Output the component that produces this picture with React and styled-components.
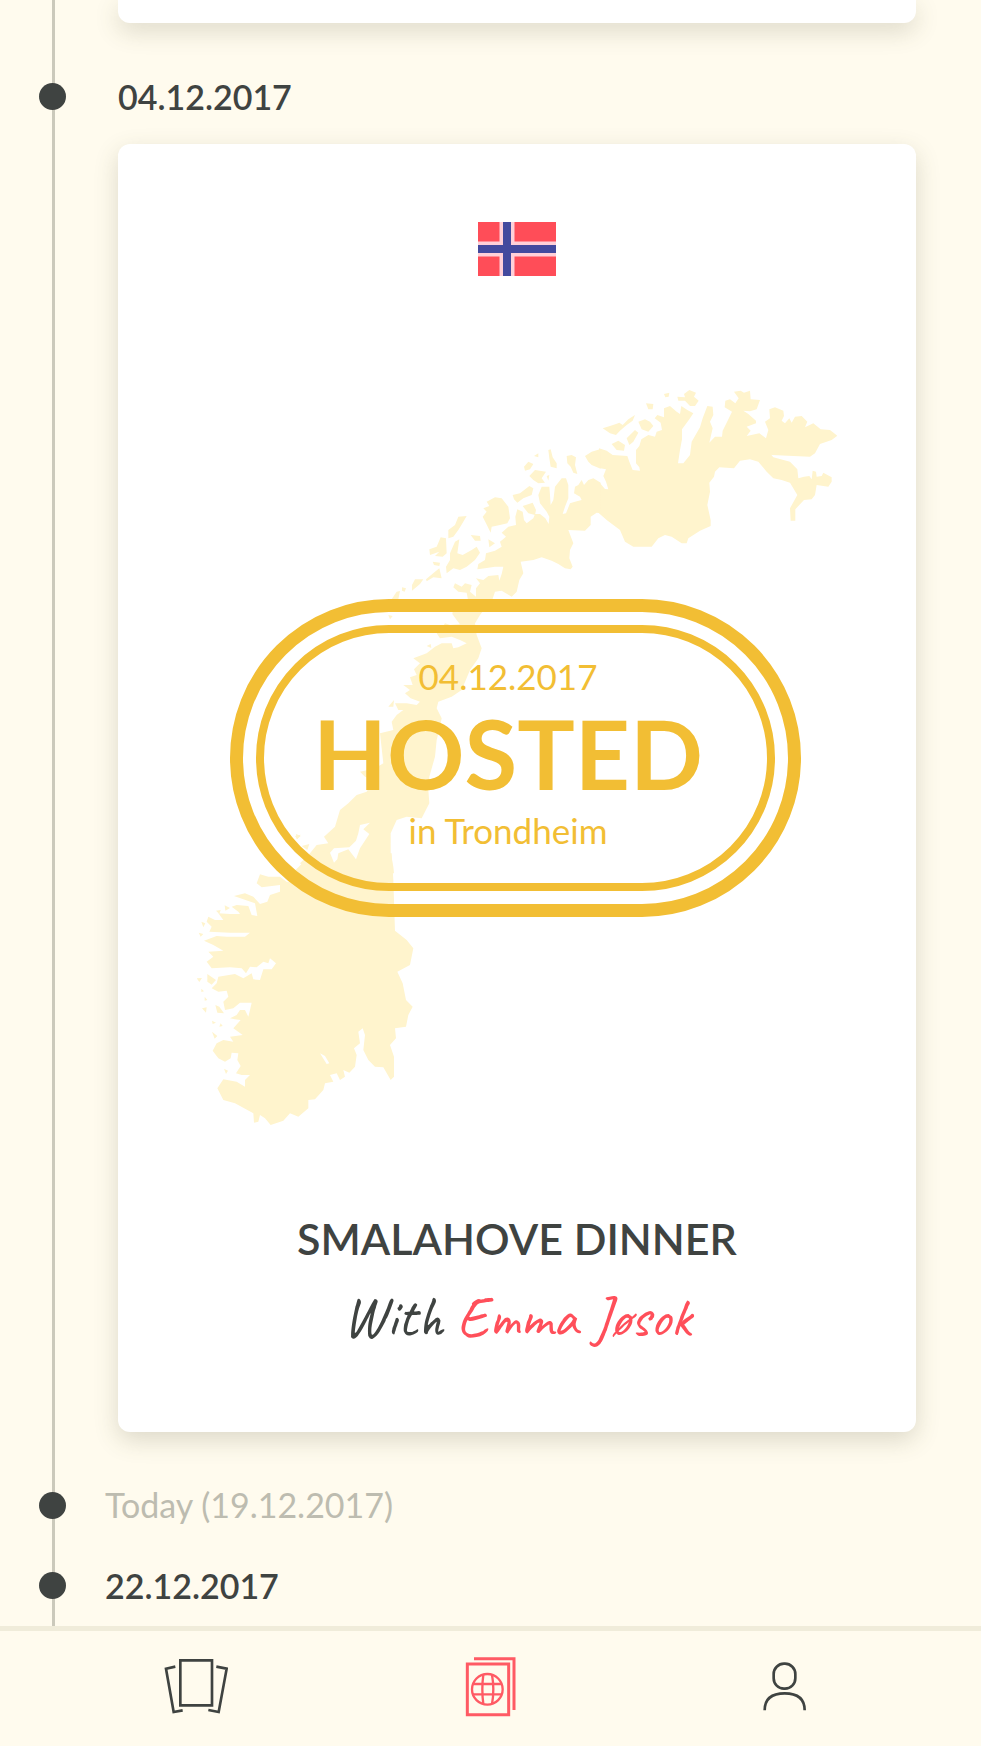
import React from "react";
import styled, { createGlobalStyle } from "styled-components";

const GlobalStyle = createGlobalStyle`
  *, *::before, *::after { box-sizing: border-box; }
  body {
    margin: 0;
    background: #fffbee;
    color: #3f4341;
    font-family: Lato, "Open Sans", sans-serif;
  }
`;

const Page = styled.div`
  min-height: 100vh;
  display: flex;
  flex-direction: column;
`;

const Timeline = styled.main`
  flex: 1;
  background: linear-gradient(#cbc9bb, #cbc9bb) 52px 0 / 3px 100% no-repeat;
`;

const Card = styled.article`
  margin: 0 65px 0 118px;
  padding: 78px 40px 87px;
  background: #fff;
  border-radius: 12px;
  box-shadow: 0 8px 24px rgba(80, 80, 50, 0.2);
  display: flex;
  flex-direction: column;
  align-items: center;
`;

const PreviousCard = styled(Card)`
  height: 23px;
  padding: 0;
  border-radius: 0 0 12px 12px;
`;

const Marker = styled.div`
  display: flex;
  align-items: center;
  gap: ${(p) => (p.$indent ? 52 : 39)}px;
  height: ${(p) => p.$height}px;
  padding: ${(p) => p.$top || 0}px 0 0 39px;
`;

const Dot = styled.span`
  flex: none;
  width: 27px;
  height: 27px;
  border-radius: 50%;
  background: #3f4341;
`;

const DateLabel = styled.time`
  font-size: 34px;
  line-height: 40px;
  font-weight: ${(p) => (p.$muted ? 400 : 600)};
  color: ${(p) => (p.$muted ? "#bdbcb0" : "#3f4341")};
`;

const Flag = styled.svg`
  display: block;
  width: 78px;
  height: 54px;
`;

const MapArea = styled.div`
  display: grid;
  place-items: center;
  width: 100%;
  max-width: 640px;
  margin: 112px 0 84px;

  & > * { grid-area: 1 / 1; }
`;

const Country = styled.svg`
  display: block;
  width: 100%;
  height: auto;
  fill: #fff4cd;
`;

const Stamp = styled.div`
  width: 571px;
  max-width: 100%;
  margin-right: 4px;
  padding: 13px;
  border: 13px solid #f2be34;
  border-radius: 160px;
`;

const StampInner = styled.div`
  height: 266px;
  padding: 0 14px 10px 0;
  border: 8px solid #f2be34;
  border-radius: 133px;
  display: flex;
  flex-direction: column;
  align-items: center;
  justify-content: center;
  color: #f2be34;
`;

const StampNote = styled.span`
  font-size: 35px;
  line-height: 40px;
`;

const StampWord = styled.strong`
  font-size: 96px;
  line-height: 114px;
  font-weight: 700;
`;

const Title = styled.h2`
  margin: 0;
  font-size: 43px;
  line-height: 56px;
  font-weight: 600;
`;

const Host = styled.p`
  margin: 22px 0 0;
  font-size: 58px;
  line-height: 56px;
  font-family: Caveat, Lato, cursive;
`;

const HostLink = styled.a`
  color: #ff4f5a;
  text-decoration: none;
`;

const TabBar = styled.nav`
  display: grid;
  grid-template-columns: repeat(3, 1fr);
  height: 120px;
  padding: 0 49px 4px;
  border-top: 5px solid #f0ecda;
`;

const Tab = styled.a`
  display: flex;
  align-items: center;
  justify-content: center;
  color: ${(p) => (p.$active ? "#ff5a64" : "#3f4341")};
`;

const TabIcon = styled.svg`
  display: block;
  fill: none;
  stroke: currentColor;
`;

function NorwayFlag() {
  return (
    <Flag viewBox="0 0 78 54" role="img" aria-label="Norway">
      <rect width="78" height="54" fill="#ff4d58" />
      <path d="M0 27H78M29 0V54" stroke="#ffd0d8" strokeWidth="15" />
      <path d="M0 27H78M29 0V54" stroke="#434a9e" strokeWidth="8" />
    </Flag>
  );
}

function NorwayMap() {
  return (
    <Country viewBox="197 388 640 739" aria-hidden="true">
      <g transform="translate(600 370) scale(.33333)">
        <path d="M-3 235L20 242 38 255 82 258 88 275 98 300 120 302 118 292 108 280 108 240 118 228 124 208 145 195 165 200 170 185 186 180 182 158 164 145 172 135 192 142 192 115 210 108 230 125 240 132 244 108 262 120 280 130 268 148 246 178 246 208 240 240 234 280 250 280 270 255 275 215 300 172 308 145 322 108 338 110 340 135 330 155 338 175 328 218 345 200 366 200 368 182 384 150 396 125 374 112 376 92 390 88 406 100 416 85 402 65 422 62 432 68 450 62 452 88 480 90 470 118 450 124 430 122 445 132 468 152 468 160 440 170 452 182 440 198 478 190 498 205 505 180 495 155 510 145 508 118 525 112 550 122 552 138 545 152 555 160 568 145 575 158 585 140 605 138 622 155 615 172 640 160 662 178 690 180 712 197 695 210 660 222 645 250 630 260 515 255 510 250 520 262 570 275 592 298 595 325 612 320 628 318 635 328 638 302 648 305 650 320 665 318 670 308 695 322 695 335 685 350 650 345 645 375 635 388 612 390 586 418 586 452 572 452 570 415 592 375 570 338 545 330 520 325 500 305 475 275 450 268 420 272 402 295 358 292 345 305 342 320 328 338 330 365 322 405 332 450 332 468 300 482 265 505 260 520 245 520 215 500 195 495 175 505 155 530 100 530 75 515 60 480 20 450-3 430V336L15 357 25 358 18 335 10 318 18 298-3 294Z" />
        <path d="M8 175L30 168 48 162 58 158 68 165 85 148 105 135 98 152 80 165 60 182 48 195 30 190ZM115 155L135 148 150 155 160 168 145 185 125 178ZM80 205L105 180 115 188 100 215 88 225ZM35 222L55 212 75 225 72 242 50 240ZM138 100L160 102 158 118 145 118ZM192 72L208 68 206 80 196 82ZM232 80L255 82 252 72 268 60 288 68 282 80 296 92 285 108 270 108 255 92 235 92Z" />
      </g>
      <g transform="translate(400 370) scale(.33333)">
        <path d="M555 258L575 245 602 237V296L575 285 565 275ZM602 338L580 325 565 330 552 345 545 330 535 345 525 350 522 370 540 380 545 390 525 395 510 400 498 430 488 432 495 410 505 385 505 345 498 325 485 325 465 350 460 390 452 405 450 375 448 350 425 350 415 375 420 400 440 425 448 440 446 462 436 445 420 432 405 432 400 445 380 460 372 450 368 425 352 418 346 440 348 465 325 470 305 488 318 500 300 515 305 530 285 542 258 550 255 570 235 582 232 598 255 595 285 590 310 590 305 612 298 632 295 615 265 618 250 630 228 625 240 640 228 655 228 680 210 665 215 645 195 640 185 650 165 640 160 652 175 665 200 668 205 695H275L285 665 305 662 335 680 350 665 358 630 370 610 362 575 400 570 425 562 455 572 475 582 495 595 512 598 518 590 508 565 510 540 520 520 505 480 555 482 572 465 572 440 590 428 602 430Z" />
        <path d="M445 240L452 238 458 262 470 280 470 295 452 290 448 265ZM500 258L515 255 528 262 525 285 532 312 520 308 512 290 502 280ZM372 290L385 275 400 282 390 298 375 302ZM402 258L415 250 415 262ZM388 318L405 300 438 305 425 325 435 338 415 340 400 330ZM440 318L448 315 445 332ZM338 375L360 370 388 348 400 355 395 375 370 385 352 398 342 388ZM368 408L398 398 408 420 405 435 385 430ZM260 395L285 382 305 385 325 410 330 445 322 460 300 465 275 470 272 488 258 460 248 440 260 425 250 415 268 408ZM145 480L165 465 175 440 200 438 190 455 175 480 160 500 145 505ZM88 538L110 530 122 502 138 505 140 550 128 560 105 558 118 545 90 555ZM165 515L178 508 172 550 188 555 215 540 230 530 240 548 225 570 200 590 180 600 160 595 140 610 138 590 150 570 150 550ZM212 495L240 498 242 512 225 512ZM265 508L285 520 268 532ZM98 575L120 578 118 588 102 585ZM78 628L105 605 118 595 125 625 100 622 80 634ZM36 645L45 628 70 628 60 642 36 662ZM6 652L18 655 14 665 6 662Z" />
      </g>
      <g transform="translate(220 590) scale(.33333)">
        <path d="M745 28L700 50 697 72 710 90 720 103 690 105 675 100 665 115 650 130 660 145 695 140 720 150 740 160 715 172 700 175 695 160 665 160 645 170 620 190 580 205 600 220 582 238 590 255 570 262 578 285 550 285 570 300 555 310 572 325 600 335 590 345 560 340 525 340 535 360 550 360 530 375 515 395 520 420 480 430 490 520 465 535 420 545 435 560 460 570 440 605 410 615 385 640 360 660 345 710 312 740 325 760 290 765 270 790 240 820 280 850H522L520 830 512 790 512 730 530 690 560 680 605 685 628 640 625 600 628 560 645 500 650 450 660 410 665 385 650 355 655 335 695 320 725 300 750 240 775 205 785 175 770 135 765 100 780 75 815 28Z" />
        <path d="M515 28L530 5 540 3 535 28ZM505 75L518 78 510 88ZM505 350L522 330 520 350ZM620 168L632 162 634 174ZM228 732L242 738 230 748ZM245 768L268 762 262 780Z" />
      </g>
      <g transform="translate(180 780) scale(.33333)">
        <path d="M400 215L355 262 330 285 345 310 320 305 300 290 265 290 240 283 230 310 245 322 300 315 300 335 270 345 262 365 240 372 220 350 195 340 162 348 190 358 225 370 232 408 215 405 205 378 170 375 155 380 175 395 180 402 150 402 115 400 130 420 105 420 85 410 80 425 95 440 88 455 150 458 210 458 195 470 140 470 110 468 72 482 100 495 130 512 85 515 100 530 80 545 95 565 150 562 185 565 198 580 210 560 230 562 250 545 265 550 270 535 288 550 275 568 250 568 240 600 220 598 215 580 190 595 165 582 115 590 110 610 95 625 115 635 140 632 145 650 130 665 135 690 160 685 180 668 215 668 210 690 205 710 195 690 180 690 170 705 150 715 165 718 182 720 160 745 188 765 150 770 160 785 130 780 110 790 98 812 115 835 135 845 152 835 155 818 175 820 172 840 182 858 168 880 185 885 210 885 195 900 195 920 170 905 130 898 112 925 130 960 165 970 220 1000 222 1028 235 1025 240 1005 255 1015 272 1035 310 1022 330 1000 355 1010 385 985 385 960 405 958 430 930 435 910 460 905 450 885 470 880 480 900 495 890 490 870 508 878 525 860 530 825 522 805 540 790 535 755 548 745 555 765 550 810 565 840 585 860 610 862 632 900 642 890 642 830 630 795 648 775 645 745 678 740 685 705 698 680 678 660 668 610 652 575 690 555 700 505 680 480 645 452 640 300 635 220Z" />
        <path d="M64 425L76 430 70 442ZM56 458L70 462 62 470ZM50 595L66 594 58 606ZM82 582L108 600 95 614 82 605ZM64 626L72 634 64 636ZM74 650L82 660 74 662ZM66 685L80 682 78 698ZM106 675L118 680 132 700 112 698ZM96 722L108 728 98 732ZM122 730L128 738 118 740ZM96 755L112 768 104 776ZM132 866L144 872 138 882ZM134 376L150 384 136 392ZM108 392L122 390 118 402ZM345 168L362 164 352 178Z" />
        <path fill="#fff" d="M570 128L540 135 535 160 528 182 508 202 462 205 450 218 462 248 472 238 475 220 505 208 528 238 540 205 568 162 550 148ZM420 820L435 828 448 850 440 852Z" />
      </g>
    </Country>
  );
}

const icons = {
  cards: (
    <TabIcon width="64" height="57" viewBox="492 655 192 171" strokeWidth="8" aria-hidden="true">
      <path d="M541 662H636V797H541ZM526 681L498 687 521 817 548 812M649 681L680 687 656 817 625 811" />
    </TabIcon>
  ),
  passport: (
    <TabIcon width="51" height="61" viewBox="75 110 153 183" strokeWidth="9" aria-hidden="true">
      <path d="M82 134H206V286H82ZM102 118H222V272" />
      <g strokeWidth="7">
        <circle cx="142" cy="210" r="46" />
        <path d="M99 194H185M99 225H185M130 166Q124 210 130 254M156 166Q164 210 156 254" />
      </g>
    </TabIcon>
  ),
  profile: (
    <TabIcon width="43" height="49" viewBox="961 130 129 147" strokeWidth="8" aria-hidden="true">
      <rect x="993" y="135" width="65" height="75" rx="31" />
      <path d="M966 275C966 238 990 224 1026 224S1086 238 1086 275" />
    </TabIcon>
  ),
};

export default function App() {
  return (
    <Page>
      <GlobalStyle />
      <Timeline>
        <PreviousCard />
        <Marker $indent $height={121} $top={26}>
          <Dot />
          <DateLabel dateTime="2017-12-04">04.12.2017</DateLabel>
        </Marker>
        <Card>
          <NorwayFlag />
          <MapArea>
            <NorwayMap />
            <Stamp>
              <StampInner>
                <StampNote>04.12.2017</StampNote>
                <StampWord>HOSTED</StampWord>
                <StampNote>in Trondheim</StampNote>
              </StampInner>
            </Stamp>
          </MapArea>
          <Title>SMALAHOVE DINNER</Title>
          <Host>
            With <HostLink href="#emma">Emma Jøsok</HostLink>
          </Host>
        </Card>
        <Marker $height={113} $top={33}>
          <Dot />
          <DateLabel $muted dateTime="2017-12-19">Today (19.12.2017)</DateLabel>
        </Marker>
        <Marker $height={81}>
          <Dot />
          <DateLabel dateTime="2017-12-22">22.12.2017</DateLabel>
        </Marker>
      </Timeline>
      <TabBar aria-label="Main">
        <Tab href="#cards" aria-label="Cards">{icons.cards}</Tab>
        <Tab href="#passport" aria-label="Passport" aria-current="page" $active>{icons.passport}</Tab>
        <Tab href="#profile" aria-label="Profile">{icons.profile}</Tab>
      </TabBar>
    </Page>
  );
}
